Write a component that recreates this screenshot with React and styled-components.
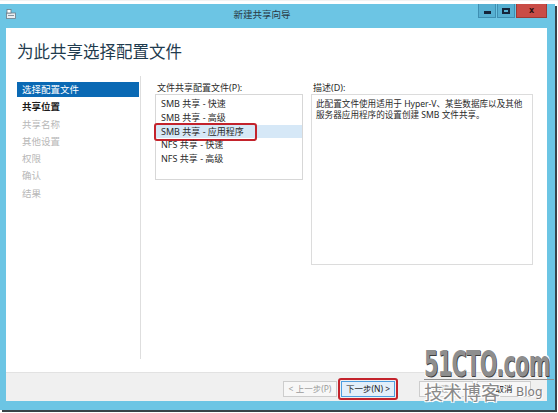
import React from 'react';
import styled, { createGlobalStyle } from 'styled-components';

const GlobalStyle = createGlobalStyle`
  html, body {
    margin: 0;
    padding: 0;
    background: #ffffff;
  }
  body {
    font-family: "Noto Sans", "Noto Sans CJK SC", sans-serif;
    -webkit-font-smoothing: antialiased;
  }
`;

const cjk = `"Noto Sans", "Noto Sans CJK SC", sans-serif`;

const Page = styled.div`
  position: relative;
  width: 558px;
  height: 413px;
  padding-top: 3px;
  box-sizing: border-box;
  overflow: hidden;
  background: #ffffff;
  border-top: 1px solid #f2f2f2;
`;

const Window = styled.div`
  width: 555px;
  height: 406px;
  box-sizing: border-box;
  background: #6cc5e4;
  padding: 0 8px 9px 6px;
  display: flex;
  flex-direction: column;
  box-shadow: 2px 2px 0 #3a4348;
`;

const TitleBar = styled.div`
  height: 21px;
  display: flex;
  align-items: flex-start;
`;

const AppIcon = styled.svg`
  margin-top: 5px;
  flex: none;
`;

const TitleText = styled.div`
  flex: 1;
  min-width: 0;
  text-align: center;
  font-family: ${cjk};
  font-size: 9.5px;
  line-height: 21px;
  color: #2a3a44;
  padding-left: 30px;
`;

const Controls = styled.div`
  flex: none;
  display: flex;
  gap: 1px;
`;

const CtrlButton = styled.div`
  flex: none;
  width: 18px;
  height: 14px;
  background: #57b0d2;
  border: 1px solid #3f8fb2;
  border-top: none;
  box-sizing: border-box;
  display: flex;
  align-items: center;
  justify-content: center;
`;

const CloseButton = styled(CtrlButton)`
  width: 31px;
  background: #c94c46;
  border-color: #9c3a35;
  color: #2a1212;
  font-family: "DejaVu Sans", sans-serif;
  font-weight: bold;
  font-size: 8px;
  line-height: 8px;
`;

const MinGlyph = styled.div`
  width: 7px;
  height: 3px;
  background: #15243a;
  margin-top: 4px;
`;

const MaxGlyph = styled.div`
  width: 8px;
  height: 6px;
  border: 2px solid #15243a;
  box-sizing: border-box;
`;

const Client = styled.div`
  flex: 1;
  background: #ffffff;
  display: flex;
  flex-direction: column;
  margin-top: 3px;
`;

const Heading = styled.h1`
  margin: 0;
  height: 48px;
  box-sizing: border-box;
  padding: 13px 0 0 11px;
  font-family: ${cjk};
  font-weight: normal;
  font-size: 16.5px;
  line-height: 21px;
  color: #1f3b4e;
`;

const Main = styled.div`
  flex: 1;
  display: flex;
  align-items: flex-start;
`;

const Nav = styled.ul`
  list-style: none;
  margin: 6px 0 0 11px;
  padding: 0;
  width: 122px;
`;

const NavItem = styled.li`
  height: 15px;
  margin-bottom: 2.3px;
  padding-left: 5px;
  font-family: ${cjk};
  font-size: 9.5px;
  line-height: 15px;
  background: ${(p) => (p.$active ? '#0a69b4' : 'transparent')};
  color: ${(p) => (p.$active ? '#ffffff' : p.$done ? '#1c1c1c' : '#b8b8b8')};
  font-weight: ${(p) => (p.$done ? 600 : 'normal')};
`;

const Divider = styled.div`
  width: 1px;
  height: 283px;
  margin-left: 1px;
  background: #dedede;
`;

const Pane = styled.div`
  display: flex;
  flex-direction: column;
  margin-left: ${(p) => p.$gap}px;
  padding-top: 5px;
  width: ${(p) => p.$width}px;
`;

const Label = styled.div`
  font-family: ${cjk};
  font-size: 9px;
  line-height: 13px;
  color: #2a2a2a;
  padding-left: 2px;
`;

const ListBox = styled.div`
  height: 86px;
  border: 1px solid #d7d7d7;
  box-sizing: border-box;
  padding-top: 2px;
`;

const ListItem = styled.div`
  position: relative;
  height: 13.8px;
  padding-left: 5px;
  font-family: ${cjk};
  font-size: 9px;
  line-height: 13.8px;
  color: #2a2a2a;
  background: ${(p) => (p.$selected ? '#d6e8f7' : 'transparent')};
`;

const RedMark = styled.div`
  position: absolute;
  left: ${(p) => p.$left}px;
  top: ${(p) => p.$top}px;
  width: ${(p) => p.$w}px;
  height: ${(p) => p.$h}px;
  border: 2px solid #c3232c;
  border-radius: 3px;
  box-sizing: border-box;
  pointer-events: none;
`;

const DescBox = styled.div`
  height: 171px;
  border: 1px solid #dcdcdc;
  box-sizing: border-box;
  padding: 4px 0 0 4px;
  font-family: ${cjk};
  font-size: 8.6px;
  line-height: 10.5px;
  color: #2a2a2a;
  white-space: nowrap;
`;

const Footer = styled.div`
  height: 29px;
  box-sizing: border-box;
  background: #f0f0f0;
  border-top: 1px solid #e2e2e2;
  display: flex;
  justify-content: flex-end;
  align-items: flex-start;
  padding: 8px 16px 0 0;
`;

const Button = styled.div`
  position: relative;
  width: 54px;
  height: 16px;
  margin-left: ${(p) => p.$gap}px;
  box-sizing: border-box;
  border: 1px solid ${(p) => (p.$primary ? '#4c9ee0' : '#cdcdcd')};
  background: ${(p) => (p.$primary ? '#e3effa' : '#f7f7f7')};
  font-family: ${cjk};
  font-size: 8.5px;
  line-height: 14px;
  text-align: center;
  color: ${(p) => (p.$disabled ? '#9b9b9b' : '#1a1a1a')};
`;

const Watermark = styled.div`
  position: absolute;
  left: 424px;
  top: 346px;
  width: 134px;
  pointer-events: none;
`;

const Brand = styled.div`
  width: 130px;
  height: 32px;
  border-bottom: 1px solid #8e8e8e;
`;

const BrandText = styled.span`
  display: inline-block;
  font-family: "DejaVu Sans Condensed", "DejaVu Sans", sans-serif;
  font-weight: bold;
  font-size: 35px;
  line-height: 35px;
  letter-spacing: -1px;
  color: #8e8e8e;
  white-space: nowrap;
  transform: scale(0.66, 1);
  transform-origin: left top;
  text-shadow: 1px 1px 0 #3e3e3e, -1px -1px 0 #ffffff, 1px -1px 0 #ffffff, -1px 1px 0 #ffffff;
`;

const Sub = styled.div`
  display: flex;
  align-items: center;
  gap: 16px;
`;

const SubCn = styled.span`
  font-family: "Noto Sans CJK SC", sans-serif;
  font-size: 19px;
  line-height: 24px;
  color: #8a8a8a;
  text-shadow: 1px 1px 0 #ffffff, -1px -1px 0 #ffffff, 1px -1px 0 #ffffff, -1px 1px 0 #ffffff;
`;

const SubEn = styled.span`
  font-family: "DejaVu Sans", sans-serif;
  font-size: 12px;
  color: #7c7c7c;
  text-shadow: 1px 1px 0 #ffffff;
`;

const steps = ['选择配置文件', '共享位置', '共享名称', '其他设置', '权限', '确认', '结果'];
const profiles = [
  'SMB 共享 - 快速',
  'SMB 共享 - 高级',
  'SMB 共享 - 应用程序',
  'NFS 共享 - 快速',
  'NFS 共享 - 高级',
];

const App = () => (
  <>
    <GlobalStyle />
    <Page>
      <Window>
        <TitleBar>
          <AppIcon width="10" height="10" viewBox="0 0 10 10">
            <rect x="0.5" y="4" width="9" height="5.5" fill="#e9eef2" stroke="#6c7c88" strokeWidth="0.8" />
            <rect x="1" y="0.5" width="4" height="3.5" fill="#ffffff" stroke="#6c7c88" strokeWidth="0.8" />
            <line x1="2" y1="6.5" x2="8" y2="6.5" stroke="#6c7c88" strokeWidth="0.8" />
          </AppIcon>
          <TitleText>新建共享向导</TitleText>
          <Controls>
            <CtrlButton><MinGlyph /></CtrlButton>
            <CtrlButton><MaxGlyph /></CtrlButton>
            <CloseButton>x</CloseButton>
          </Controls>
        </TitleBar>
        <Client>
          <Heading>为此共享选择配置文件</Heading>
          <Main>
            <Nav>
              {steps.map((s, i) => (
                <NavItem key={s} $active={i === 0} $done={i === 1}>{s}</NavItem>
              ))}
            </Nav>
            <Divider />
            <Pane $gap={14} $width={148}>
              <Label>文件共享配置文件(P):</Label>
              <ListBox>
                {profiles.map((p, i) => (
                  <ListItem key={p} $selected={i === 2}>
                    {p}
                    {i === 2 && <RedMark $left={-2} $top={-2} $w={103} $h={18} />}
                  </ListItem>
                ))}
              </ListBox>
            </Pane>
            <Pane $gap={8} $width={222}>
              <Label>描述(D):</Label>
              <DescBox>
                此配置文件使用适用于 Hyper-V、某些数据库以及其他
                <br />
                服务器应用程序的设置创建 SMB 文件共享。
              </DescBox>
            </Pane>
          </Main>
          <Footer>
            <Button $gap={0} $disabled>&lt; 上一步(P)</Button>
            <Button $gap={4} $primary>
              下一步(N) &gt;
              <RedMark $left={-4} $top={-4} $w={60} $h={22} />
            </Button>
            <Button $gap={24} $disabled>创建(C)</Button>
            <Button $gap={4}>取消</Button>
          </Footer>
        </Client>
      </Window>
      <Watermark>
        <Brand>
          <BrandText>51CTO.com</BrandText>
        </Brand>
        <Sub>
          <SubCn>技术博客</SubCn>
          <SubEn>Blog</SubEn>
        </Sub>
      </Watermark>
    </Page>
  </>
);

export default App;
